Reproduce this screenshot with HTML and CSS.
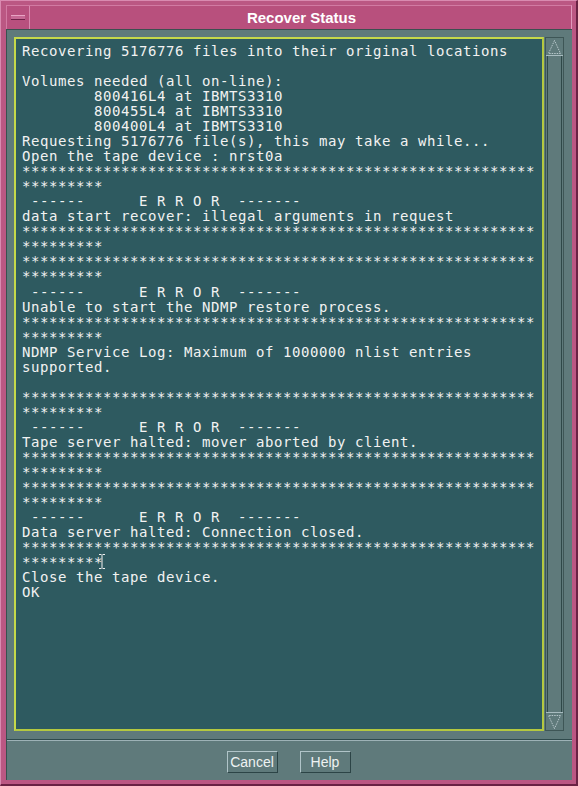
FILE: index.html
```html
<!DOCTYPE html>
<html>
<head>
<meta charset="utf-8">
<link rel="stylesheet" href="styles.css">
</head>
<body>
<div class="window">
  <div class="titlebar">
    <div class="menu-btn"><span class="menu-bar"></span></div>
    <div class="title">Recover Status</div>
  </div>
  <div class="client">
    <div class="main">
      <div class="text-area">
<pre class="log">Recovering 5176776 files into their original locations

Volumes needed (all on-line):
	800416L4 at IBMTS3310
	800455L4 at IBMTS3310
	800400L4 at IBMTS3310
Requesting 5176776 file(s), this may take a while...
Open the tape device : nrst0a
*********************************************************
*********
 ------      E R R O R  -------
data start recover: illegal arguments in request
*********************************************************
*********
*********************************************************
*********
 ------      E R R O R  -------
Unable to start the NDMP restore process.
*********************************************************
*********
NDMP Service Log: Maximum of 1000000 nlist entries
supported.

*********************************************************
*********
 ------      E R R O R  -------
Tape server halted: mover aborted by client.
*********************************************************
*********
*********************************************************
*********
 ------      E R R O R  -------
Data server halted: Connection closed.
*********************************************************
*********
Close the tape device.
OK</pre>
        <svg class="ibeam" width="6" height="15" viewBox="0 0 6 15"><path d="M0 0.5H2.5M3.5 0.5H6M3 1V14M0 14.5H2.5M3.5 14.5H6" stroke="#f0f0f0" stroke-width="1" fill="none"/></svg>
      </div>
      <div class="scrollbar">
        <div class="arrow up"><svg width="15" height="16" viewBox="0 0 15 16"><path d="M7.5 1.5L1.5 14.5H13.5Z" fill="none" stroke="#b8c8cc" stroke-width="1" stroke-dasharray="1.5 1"/></svg></div>
        <div class="trough"><div class="slider"></div></div>
        <div class="arrow down"><svg width="15" height="16" viewBox="0 0 15 16"><path d="M7.5 14.5L1.5 1.5H13.5Z" fill="none" stroke="#b8c8cc" stroke-width="1" stroke-dasharray="1.5 1"/></svg></div>
      </div>
    </div>
    <div class="sep"></div>
    <div class="buttons">
      <button class="btn">Cancel</button>
      <button class="btn">Help</button>
    </div>
  </div>
</div>
</body>
</html>
```
FILE: styles.css
```css
html, body {
  margin: 0;
  padding: 0;
  background: #b9567f;
}
.window {
  width: 578px;
  height: 786px;
  box-sizing: border-box;
  display: flex;
  flex-direction: column;
  background: #bb5783;
  border-top: 1px solid #d98ab0;
  border-left: 1px solid #d98ab0;
  border-right: 2px solid #6a2244;
  border-bottom: 2px solid #6a2244;
  padding: 4px 4px 4px 5px;
}
.titlebar {
  height: 24px;
  display: flex;
  border-top: 1px solid #d27aa3;
  border-left: 1px solid #d27aa3;
  border-right: 1px solid #e098bb;
  box-sizing: border-box;
}
.menu-btn {
  width: 22px;
  display: flex;
  align-items: center;
  justify-content: center;
  border-right: 1px solid #d98ab0;
  background: #b8507e;
}
.menu-bar {
  display: block;
  width: 14px;
  height: 3px;
  background: #c66894;
  border-top: 1px solid #e8a4c4;
  border-bottom: 1px solid #6e2248;
}
.title {
  flex: 1;
  background: #b8507d;
  color: #ffffff;
  font-family: "Liberation Sans", Arial, sans-serif;
  font-weight: bold;
  font-size: 15px;
  line-height: 23px;
  text-align: center;
  padding-left: 2px;
}
.client {
  flex: 1;
  background: #5f7a7b;
  display: flex;
  flex-direction: column;
  border-top: 1px solid #3a5050;
  border-left: 1px solid #3a5050;
}
.main {
  flex: 1;
  display: flex;
  padding: 7px 8px 0 7px;
  gap: 1px;
}
.text-area {
  flex: 1;
  position: relative;
  background: #2e5a60;
  border: 2px solid #c6d84a;
  border-right-color: #b4c840;
  border-bottom-color: #b4c840;
}
.log {
  margin: 0;
  padding: 5px 0 0 6px;
  font-family: "DejaVu Sans Mono", monospace;
  font-size: 14px;
  letter-spacing: 0.57px;
  line-height: 15.03px;
  color: #f2f2f2;
  tab-size: 8;
  white-space: pre;
}
.ibeam {
  position: absolute;
  left: 83px;
  top: 515px;
}
.scrollbar {
  width: 17px;
  display: flex;
  flex-direction: column;
  border: 1px solid #3e5656;
  background: #5f7a7b;
}
.arrow {
  height: 17px;
  display: flex;
  align-items: center;
  justify-content: center;
  background: #5f7a7b;
}
.arrow.up { border-bottom: 1px solid #a8bcc0; }
.arrow.down { border-top: 1px solid #a8bcc0; }
.trough {
  flex: 1;
  display: flex;
  padding: 0 1px;
}
.slider {
  flex: 1;
  background: #5f7a7b;
  border-left: 1px solid #2f4848;
  border-right: 1px solid #2f4848;
}
.sep {
  margin-top: 8px;
  border-top: 1px solid #2f4a4c;
  border-bottom: 1px solid #9db2b6;
}
.buttons {
  height: 39px;
  display: flex;
  align-items: center;
  justify-content: center;
  gap: 22px;
  padding: 2px 2px 0 0;
  box-sizing: border-box;
}
.btn {
  width: 51px;
  height: 22px;
  padding: 0;
  background: #5f7a7b;
  color: #eef2f2;
  font-family: "Liberation Sans", Arial, sans-serif;
  font-size: 14px;
  border: 1px solid;
  border-color: #b0c4c8 #2c4446 #2c4446 #b0c4c8;
}
```
